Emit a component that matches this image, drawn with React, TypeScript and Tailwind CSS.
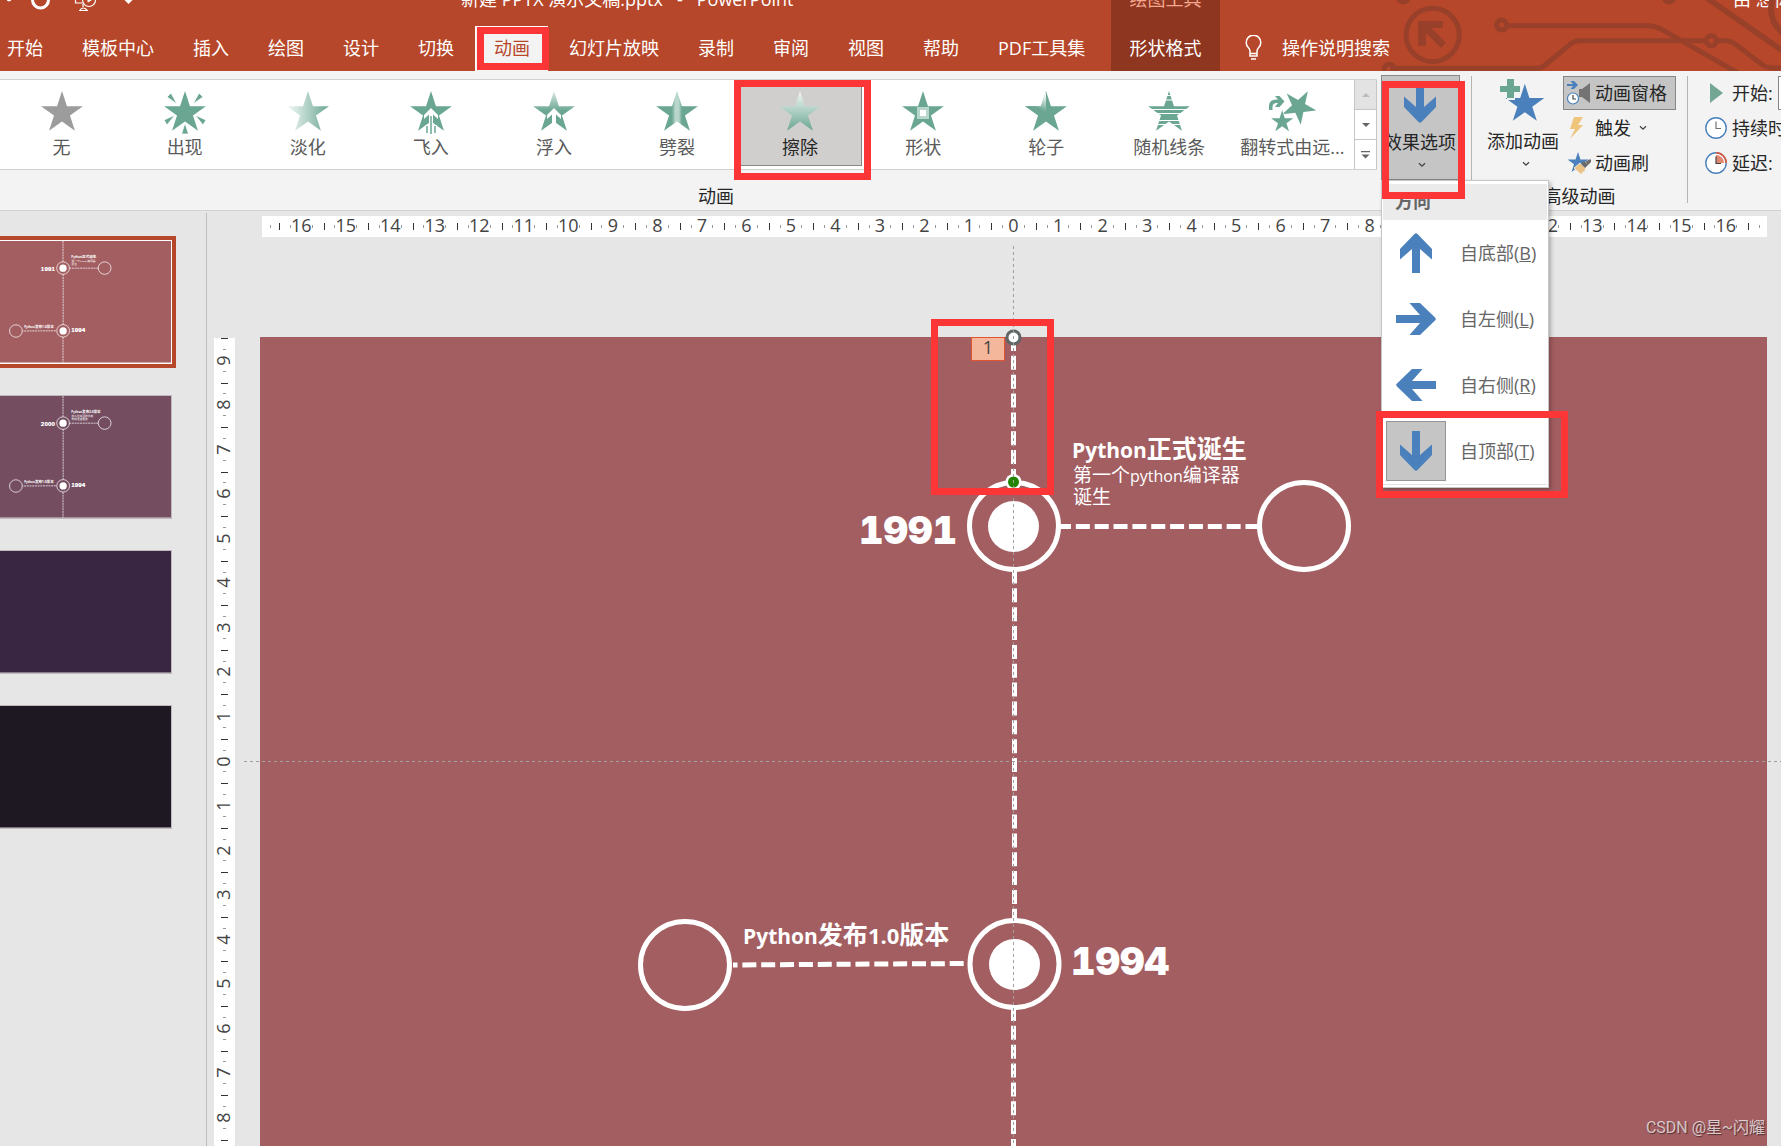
import React from "react";

const STAR =
  "M24 2 28.94 17.2 44.92 17.2 31.99 26.6 36.93 41.8 24 32.4 11.07 41.8 16.01 26.6 3.08 17.2 19.06 17.2Z";
const GREEN = "#6aa692";
const BLUE = "#4a80bb";

/* ---------- shared pieces ---------- */

function Highlight({ className }: { className: string }) {
  return (
    <div
      aria-hidden="true"
      className={`pointer-events-none absolute z-30 border-[7px] border-[#fc3636] ${className}`}
    />
  );
}

function Chevron() {
  return (
    <svg width="8" height="6" viewBox="0 0 8 6" fill="none" aria-hidden="true">
      <path d="M1 1.2 4 4.2 7 1.2" stroke="#444" strokeWidth="1.3" />
    </svg>
  );
}

function BlueArrow({ turn }: { turn: number }) {
  return (
    <svg width="40" height="40" viewBox="0 0 40 40" aria-hidden="true">
      <path
        d="M16 0H24V24L36 13.5V24L21.5 39Q20 40.6 18.5 39L4 24V13.5L16 24Z"
        fill={BLUE}
        transform={`rotate(${turn} 20 20)`}
      />
    </svg>
  );
}

/* ---------- title bar and tabs ---------- */

const TABS = [
  "开始", "模板中心", "插入", "绘图", "设计", "切换", "动画",
  "幻灯片放映", "录制", "审阅", "视图", "帮助", "PDF工具集",
];

function Circuit() {
  return (
    <svg
      className="pointer-events-none absolute right-0 top-0 h-[71px] w-[441px]"
      viewBox="0 0 1323 213"
      fill="none"
      stroke="#984029"
      strokeWidth="15"
      aria-hidden="true"
    >
      <circle cx="278" cy="105" r="80" />
      <path
        d="M234 63H309V84H274L318 128 303 144 258 99V138H234Z"
        fill="#984029"
        stroke="none"
      />
      <circle cx="485" cy="75" r="15" />
      <path d="M500 77H925Q945 77 965 88L1210 228" />
      <circle cx="148" cy="208" r="15" />
      <path d="M150 205H590Q604 205 612 198L690 133Q702 122 718 122H1098" />
      <circle cx="1114" cy="122" r="15" />
      <path d="M1130 122H1155Q1172 122 1186 133L1268 195Q1282 204 1300 204H1323" />
      <path d="M1095 -10 1330 154" strokeWidth="17" />
      <circle cx="190" cy="-9" r="15" />
      <circle cx="987" cy="-9" r="15" />
      <circle cx="1385" cy="26" r="92" strokeWidth="18" />
    </svg>
  );
}

function Header() {
  return (
    <header className="relative flex h-[71px] shrink-0 overflow-hidden whitespace-nowrap bg-[#b7472a] text-lg text-white">
      <Circuit />
      <div className="flex w-[1111px] shrink-0 flex-col">
        <div className="flex h-[26px] items-start overflow-hidden">
          <svg className="w-[461px] shrink-0" height="12" viewBox="0 0 461 12" fill="none" stroke="#fff" aria-hidden="true">
            <path d="M7 0h4l-2 1z" fill="#fff" />
            <circle cx="40.500" cy="0" r="8" strokeWidth="3" />
            <path d="M75.500 -2v5h7M83 4v3M79 10.500h9M80 10q3-4 7 0" strokeWidth="1.200" />
            <circle cx="89" cy="0" r="6.500" strokeWidth="1.200" />
            <path d="M88 -3v5l4-2.500z" fill="#fff" />
            <path d="M124.500 0h8l-4 4z" fill="#fff" stroke="none" />
          </svg>
          <span className="-mt-[15px] leading-7">新建 PPTX 演示文稿.pptx&nbsp;&nbsp; -&nbsp;&nbsp; PowerPoint</span>
        </div>
        <nav className="flex h-[45px] items-stretch gap-[39px] pl-[7px]">
          {TABS.map((tab) =>
            tab === "动画" ? (
              <button
                key={tab}
                type="button"
                aria-current="page"
                className="relative -mx-[18px] border-l border-t border-white bg-[#f3f3f3] px-[18px] pb-[3px] text-[#b7472a]"
              >
                {tab}
                <Highlight className="-right-px bottom-px left-px top-0" />
              </button>
            ) : (
              <button key={tab} type="button" className="pb-0.5">
                {tab}
              </button>
            ),
          )}
        </nav>
      </div>
      <div className="flex w-[109px] shrink-0 flex-col items-center bg-[#8f3621]">
        <div className="h-[26px] overflow-hidden text-[#f4a78f]">
          <div className="-mt-[13px] leading-6">绘图工具</div>
        </div>
        <button type="button" className="h-[45px] pb-0.5">形状格式</button>
      </div>
      <div className="flex min-w-0 flex-1 flex-col">
        <div className="flex h-[26px] justify-end overflow-hidden">
          <span className="-mt-[15px] w-[48px] leading-7">由 想你</span>
        </div>
        <button type="button" className="flex h-[45px] items-center gap-5 pb-0.5 pl-[25px]">
          <svg width="17" height="25" viewBox="0 0 17 25" fill="none" stroke="#fff" strokeWidth="1.500" aria-hidden="true">
            <path d="M5 18.500V16Q5 14.500 3.500 12.800A7.300 7.300 0 1 1 13.500 12.800Q12 14.500 12 16V18.500ZM5 18.500V21H12V18.500M6 24H11" />
          </svg>
          操作说明搜索
        </button>
      </div>
    </header>
  );
}

/* ---------- animation gallery ---------- */

function Defs() {
  return (
    <svg width="0" height="0" className="absolute" aria-hidden="true">
      <defs>
        <linearGradient id="g-fade" x1="0" x2="1" y1="0" y2="0">
          <stop offset="0.05" stopColor="#edf5f2" />
          <stop offset="1" stopColor={GREEN} />
        </linearGradient>
        <linearGradient id="g-float" x1="0" x2="0" y1="0" y2="1">
          <stop offset="0" stopColor="#dbeae5" />
          <stop offset="0.5" stopColor={GREEN} />
        </linearGradient>
        <linearGradient id="g-wipe" x1="0" x2="0" y1="0" y2="1">
          <stop offset="0" stopColor="#f2f8f6" />
          <stop offset="1" stopColor={GREEN} />
        </linearGradient>
        <linearGradient id="g-split" x1="0" x2="1" y1="0" y2="0">
          <stop offset="0.38" stopColor={GREEN} />
          <stop offset="0.46" stopColor="#b9d6cc" />
          <stop offset="0.54" stopColor="#b9d6cc" />
          <stop offset="0.62" stopColor={GREEN} />
        </linearGradient>
        <linearGradient id="g-wheel" x1="0.2" x2="0.45" y1="0.6" y2="0">
          <stop offset="0" stopColor={GREEN} />
          <stop offset="1" stopColor="#f2f8f6" />
        </linearGradient>
      </defs>
    </svg>
  );
}

const UP_ARROW = "M24 19 31 26V30L26 25.500V38H22V25.500L17 30V26Z";

const EFFECTS: { label: string; art: React.ReactNode }[] = [
  { label: "无", art: <path d={STAR} fill="#9c9c9c" /> },
  {
    label: "出现",
    art: (
      <g fill={GREEN}>
        <path d={STAR} />
        <g stroke="#fff" strokeWidth="0.800">
          <path d="M6 8 10 4 16 15ZM42 8 38 4 32 15Z" />
          <path d="M3 31 6 36 14 26ZM45 31 42 36 34 26ZM24 34 27.500 45H20.500Z" />
        </g>
      </g>
    ),
  },
  { label: "淡化", art: <path d={STAR} fill="url(#g-fade)" /> },
  {
    label: "飞入",
    art: (
      <>
        <path d={STAR} fill={GREEN} />
        <path d={UP_ARROW} fill="#fff" />
        <path d="M24 33V45M20 36V44M28 36V44" stroke="#fff" strokeWidth="3.600" />
        <path d="M24 27V45M20 37V44M28 37V44" stroke={GREEN} strokeWidth="1.500" />
      </>
    ),
  },
  {
    label: "浮入",
    art: (
      <>
        <path d={STAR} fill="url(#g-float)" />
        <path d={UP_ARROW} fill="#fff" />
      </>
    ),
  },
  { label: "劈裂", art: <path d={STAR} fill="url(#g-split)" /> },
  { label: "擦除", art: <path d={STAR} fill="url(#g-wipe)" /> },
  {
    label: "形状",
    art: (
      <>
        <path d={STAR} fill={GREEN} />
        <path d="M18 18H30V30H18Z" fill="#b9d6cc" />
        <path d="M21 21H27V27H21Z" fill="#fff" />
      </>
    ),
  },
  {
    label: "轮子",
    art: (
      <>
        <path d={STAR} fill={GREEN} />
        <path d="M24 2V24L16.500 24.800 3.080 17.200H19.060Z" fill="url(#g-wheel)" />
      </>
    ),
  },
  {
    label: "随机线条",
    art: (
      <>
        <path d={STAR} fill={GREEN} />
        <path d="M0 6.500H48M0 11H48M0 20.500H48M0 24.500H48M0 31.500H48M0 35.500H48" stroke="#fff" strokeWidth="1.200" />
      </>
    ),
  },
  {
    label: "翻转式由远...",
    art: (
      <g fill={GREEN}>
        <path d={STAR} transform="translate(30.800 17.800) rotate(30) scale(0.820) translate(-24 -24)" />
        <path
          d={STAR}
          transform="translate(14.200 32.800) scale(0.530) translate(-24 -24)"
          stroke="#fff"
          strokeWidth="2"
          paintOrder="stroke"
        />
        <path d="M1 21V17Q1 10 10 10.500L7 7H11.500L16.500 12.500 11.500 18H7L10 14Q4.500 13.500 4.500 18V21Z" />
      </g>
    ),
  },
];

function Gallery() {
  return (
    <div className="mt-2 flex h-[91px] min-w-0 flex-1 border-y border-[#d1d1d1] bg-white">
      <div className="grid min-w-0 flex-1 grid-cols-11">
        {EFFECTS.map((e) => {
          const on = e.label === "擦除";
          return (
            <button
              key={e.label}
              type="button"
              aria-pressed={on}
              className={
                on
                  ? "relative mt-[3px] flex h-[83px] flex-col items-center border border-[#868a80] bg-[#d1cfcd] pt-[5px] text-[#262626]"
                  : "mt-[3px] flex h-[83px] flex-col items-center border border-transparent pt-[5px] text-[#5a5a5a]"
              }
            >
              <svg width="48" height="48" viewBox="0 0 48 48" aria-hidden="true">
                {e.art}
              </svg>
              <span className="whitespace-nowrap text-lg leading-5">{e.label}</span>
              {on && <Highlight className="-bottom-[15px] -left-1.5 -right-2.5 -top-1" />}
            </button>
          );
        })}
      </div>
      <div className="flex w-[23px] flex-col border-x border-[#c6c6c6]">
        <button type="button" aria-label="上一行" className="flex flex-1 items-center justify-center bg-[#e3e3e3]">
          <svg width="8" height="4" viewBox="0 0 8 4" aria-hidden="true"><path d="M0 4 4 0 8 4Z" fill="#bcbcbc" /></svg>
        </button>
        <button type="button" aria-label="下一行" className="flex flex-1 items-center justify-center border-t border-[#c6c6c6]">
          <svg width="8" height="4" viewBox="0 0 8 4" aria-hidden="true"><path d="M0 0 4 4 8 0Z" fill="#666" /></svg>
        </button>
        <button type="button" aria-label="其他" className="flex flex-1 items-center justify-center border-t border-[#c6c6c6]">
          <svg width="9" height="8" viewBox="0 0 9 8" aria-hidden="true"><path d="M0 0H9V1.200H0ZM0.500 3.500 4.500 7.500 8.500 3.500Z" fill="#666" /></svg>
        </button>
      </div>
    </div>
  );
}

/* ---------- effect options ---------- */

const DIRECTIONS = [
  { label: "自底部", key: "B", turn: 180 },
  { label: "自左侧", key: "L", turn: 270 },
  { label: "自右侧", key: "R", turn: 90 },
  { label: "自顶部", key: "T", turn: 0 },
];

function DirectionMenu() {
  return (
    <div className="absolute left-0 top-[105px] z-20 w-[168px] border border-[#c6c6c6] bg-white px-px pt-[3px] text-lg shadow-[2px_2px_4px_rgba(0,0,0,0.25)]">
      <div className="flex h-9 items-center bg-[#ebebeb] pb-0.5 pl-3 font-bold text-[#666]">方向</div>
      <ul>
        {DIRECTIONS.map((d) => (
          <li key={d.key}>
            <button type="button" className="flex h-[66px] w-full items-center pl-[3px] text-[#666]">
              <span
                className={
                  d.key === "T"
                    ? "flex size-[60px] items-center justify-center border border-[#969696] bg-[#c5c5c5]"
                    : "flex size-[60px] items-center justify-center"
                }
              >
                <BlueArrow turn={d.turn} />
              </span>
              <span className="ml-3.5">
                {d.label}(<u>{d.key}</u>)
              </span>
            </button>
          </li>
        ))}
      </ul>
      <div className="h-[3px] border-t border-[#e1e1e1]" />
      <Highlight className="-left-1.5 -right-5 -bottom-[11px] h-[87px]" />
    </div>
  );
}

function EffectOptions() {
  return (
    <div className="relative ml-1 mr-[11px] mt-1">
      <button
        type="button"
        aria-expanded="true"
        className="flex h-[105px] w-[79px] flex-col items-center border border-[#868686] bg-[#c5c5c5] pr-px pt-[7px] text-[#262626]"
      >
        <BlueArrow turn={0} />
        <span className="mt-[7px] whitespace-nowrap text-lg leading-6">效果选项</span>
        <span className="mt-2 pl-1"><Chevron /></span>
      </button>
      <DirectionMenu />
      <Highlight className="left-px top-1.5 h-[118px] w-[83px]" />
    </div>
  );
}

/* ---------- ribbon ---------- */

function Separator() {
  return <div className="mt-[5px] h-[127px] w-px shrink-0 bg-[#b4b4b4]" />;
}

function PaneIcon() {
  return (
    <svg width="24" height="26" viewBox="0 0 24 26" aria-hidden="true">
      <path d="M0 4H6L3.500 1H7L11 5 7 9H3.500L6 6H0Z" fill={BLUE} />
      <path d="M23 3V23L15 17H12V9H15Z" fill="#737373" />
      <circle cx="6" cy="18.500" r="5.500" fill="#fff" stroke={BLUE} strokeWidth="1.200" />
      <path d="M6 15V19H9" fill="none" stroke="#444" strokeWidth="1.200" />
    </svg>
  );
}

function ClockIcon({ delay }: { delay?: boolean }) {
  return (
    <svg width="22" height="22" viewBox="0 0 22 22" fill="none" aria-hidden="true">
      <circle cx="11" cy="11" r="10.200" fill="#fff" stroke={BLUE} strokeWidth="1.400" />
      {delay && <path d="M11 0.800A10.200 10.200 0 0 1 21.200 11" stroke="#d8593c" strokeWidth="1.600" />}
      {delay && <path d="M11 3A8 8 0 0 1 19 11H11Z" fill="#e08872" />}
      <path d="M11 4.500V11.500H16" stroke={delay ? "#444" : "#737373"} strokeWidth="1.200" />
    </svg>
  );
}

function Ribbon() {
  return (
    <section className="relative z-10 flex h-[140px] shrink-0 border-b border-[#d1d1d1] bg-[#f3f3f3] text-lg text-[#262626]">
      <Defs />
      <div className="flex min-w-0 flex-1 flex-col">
        <div className="flex h-[110px] items-start">
          <Gallery />
          <EffectOptions />
        </div>
        <div className="pr-[39px] text-center leading-8">动画</div>
      </div>
      <Separator />
      <div className="flex w-[215px] shrink-0 flex-col whitespace-nowrap">
        <div className="flex h-[110px] items-start">
          <button type="button" className="ml-3 flex w-[78px] flex-col items-center pt-[7px]">
            <svg width="48" height="46" viewBox="0 0 48 46" aria-hidden="true">
              <path d={STAR} fill={BLUE} transform="translate(3.500 4) scale(0.930)" />
              <path d="M8 0H16V8H22V17H16V22H8V15H1V8H8Z" fill="#f3f3f3" />
              <path d="M8 1H15V8H21V14H15V20H8V14H1V8H8Z" fill={GREEN} />
            </svg>
            <span className="mt-[5px] leading-6">添加动画</span>
            <span className="mt-2 pl-1.5"><Chevron /></span>
          </button>
          <div className="ml-px pt-[5px]">
            <button type="button" aria-pressed="true" className="flex h-[34px] w-[113px] items-center gap-1 border border-[#868686] bg-[#c5c5c5] pl-[3px]">
              <PaneIcon />
              动画窗格
            </button>
            <button type="button" className="flex h-[35px] items-center gap-1 pl-1">
              <svg width="24" height="22" viewBox="0 0 24 22" aria-hidden="true">
                <path d="M7 0H16L11 8H16L3 22 8 12H3Z" fill="#efc57c" />
              </svg>
              触发
              <span className="ml-1"><Chevron /></span>
            </button>
            <button type="button" className="flex h-[35px] items-center gap-1 pl-1">
              <svg width="24" height="24" viewBox="0 0 24 24" aria-hidden="true">
                <path d={STAR} fill={BLUE} transform="translate(-1 0) scale(0.500)" />
                <path d="M7 17 13 12 19 18 14 23.500Z" fill="#eac284" stroke="#f3f3f3" strokeWidth="0.800" />
                <path d="M14 13 17 10 21 14 18 17ZM18.500 11 22 8.500H24V11L21 14Z" fill="#6a6a6a" />
              </svg>
              动画刷
            </button>
          </div>
        </div>
        <div className="text-center leading-8">高级动画</div>
      </div>
      <Separator />
      <div className="w-[93px] shrink-0 overflow-hidden whitespace-nowrap pl-[17px] pt-[4px]">
        <div className="flex h-[35px] items-center gap-[5px]">
          <svg width="22" height="20" viewBox="0 0 22 20" className="shrink-0" aria-hidden="true">
            <path d="M5 0V20L18 10Z" fill="#74a694" />
          </svg>
          <label htmlFor="start">开始:</label>
          <select id="start" className="h-[34px] w-24 shrink-0 border border-[#868686] bg-white">
            <option>单击时</option>
          </select>
        </div>
        <div className="flex h-[35px] items-center gap-[5px]">
          <span className="shrink-0"><ClockIcon /></span>
          <span>持续时间:</span>
        </div>
        <div className="flex h-[35px] items-center gap-[5px]">
          <span className="shrink-0"><ClockIcon delay /></span>
          <span>延迟:</span>
        </div>
      </div>
    </section>
  );
}

/* ---------- slide drawing ---------- */

type SlideData = {
  color: string;
  top?: { year: string; latin: string; rest: string; sub: React.ReactNode };
};

const SERIES = "'Open Sans','Noto Sans CJK SC',sans-serif";

const SLIDES: SlideData[] = [
  {
    color: "#a35e62",
    top: {
      year: "1991",
      latin: "",
      rest: "正式诞生",
      sub: (
        <>
          <text x="813" y="145" fontSize="19">第一个<tspan fontSize="16">python</tspan>编译器</text>
          <text x="813" y="167" fontSize="19">诞生</text>
        </>
      ),
    },
  },
  {
    color: "#744d61",
    top: {
      year: "2000",
      latin: "2.0",
      rest: "版本",
      sub: (
        <>
          <text x="813" y="145" fontSize="19">加入垃圾回收机制</text>
          <text x="813" y="167" fontSize="19">构成语言框架</text>
        </>
      ),
    },
  },
  { color: "#382642" },
  { color: "#1e1823" },
];

function SlideArt({ data, editing }: { data: SlideData; editing?: boolean }) {
  const { color, top } = data;
  return (
    <svg
      viewBox="0 0 1507 848"
      className="block h-auto w-full overflow-visible"
      fontFamily={SERIES}
      fill="#fff"
      role="img"
      aria-label="幻灯片"
    >
      <rect width="1507" height="848" fill={color} />
      {top && (
        <>
          <g stroke="#fff" strokeWidth="5" fill="none" strokeDasharray="14 4.850">
            <path d="M753.500 0V144" />
            <path d="M754.500 232.500V582" />
            <path d="M753.500 670V848" />
            <path d="M797 189.500H998" />
            <path d="M473 628 705 626.500" strokeDashoffset="9.500" />
          </g>
          <g stroke="#fff" strokeWidth="5" fill="none">
            <ellipse cx="754" cy="189" rx="44.500" ry="43.500" />
            <ellipse cx="1044" cy="189" rx="44.500" ry="43.500" />
            <ellipse cx="425" cy="628" rx="44.500" ry="43.500" />
            <ellipse cx="754.500" cy="627" rx="44.500" ry="43.500" />
          </g>
          <circle cx="753.500" cy="189.500" r="25.500" />
          <circle cx="754.500" cy="627.500" r="25.500" />
          <g fontFamily="Inter, sans-serif" fontWeight="900" fontSize="38" style={{ fontVariantNumeric: "tabular-nums" }}>
            <text x="697" y="207" textAnchor="end">{top.year}</text>
            <text x="811" y="638">1994</text>
          </g>
          <g fontWeight="700" fontSize="25">
            <text x="812" y="121">
              <tspan fontSize="21">Python</tspan>
              {top.latin ? <>发布<tspan fontSize="21">{top.latin}</tspan></> : null}
              {top.rest}
            </text>
            <text x="483" y="607">
              <tspan fontSize="21">Python</tspan>发布<tspan fontSize="22">1.0</tspan>版本
            </text>
          </g>
          {top.sub}
        </>
      )}
      {editing && (
        <>
          <circle cx="753.500" cy="0.500" r="6.500" stroke="#606666" strokeWidth="3" />
          <circle cx="753.500" cy="145" r="8" />
          <circle cx="753.500" cy="145" r="5.500" fill="#228400" />
          <g stroke="#a0a0a0" strokeWidth="1" strokeDasharray="3 3" fill="none">
            <path d="M753.500 -91V848" />
            <path d="M-16 424.500H1521" />
          </g>
          <rect x="711.500" y="0.500" width="33" height="23" fill="#f5b79b" stroke="#e0552f" />
          <text x="728" y="17" fontSize="18" textAnchor="middle" fill="#444">1</text>
          <rect x="674.500" y="-14.500" width="116" height="169" fill="none" stroke="#fc3636" strokeWidth="7" />
        </>
      )}
    </svg>
  );
}

/* ---------- workspace ---------- */

function Thumbnails() {
  return (
    <aside className="mt-0.5 w-[207px] shrink-0 overflow-hidden border-r border-[#bdbdbd] pt-[23px]">
      <ol>
        {SLIDES.map((s, i) => (
          <li key={s.color} className="h-[155px]">
            {i === 0 ? (
              <button type="button" aria-current="true" className="-ml-[50px] block w-[226px] border-4 border-[#b7472a] bg-white p-px">
                <SlideArt data={s} />
              </button>
            ) : (
              <button type="button" className="-ml-[46px] block w-[218px] pt-1">
                <span className="block border border-[#c0b8ba]">
                  <SlideArt data={s} />
                </span>
              </button>
            )}
          </li>
        ))}
      </ol>
    </aside>
  );
}

const range = (n: number) => Array.from({ length: 2 * n + 1 }, (_, i) => Math.abs(i - n));

function HorizontalRuler() {
  return (
    <div className="ml-[55px] mr-[14px] mt-[5px] flex h-[21px] shrink-0 items-center bg-white text-lg leading-none text-[#444]">
      <div className="flex w-[17px] justify-center"><i className="h-[3px] w-px bg-[#999]" /></div>
      {range(16).map((n, i) => (
        <div key={i} className="flex h-[18px] flex-1 items-center justify-between">
          <i className="h-[7px] w-px bg-[#333]" />
          <i className="h-[3px] w-px bg-[#999]" />
          <span className="flex w-px justify-center pb-1">{n}</span>
          <i className="h-[3px] w-px bg-[#999]" />
          <i className="w-px" />
        </div>
      ))}
      <div className="flex w-[19px] items-center gap-2.5">
        <i className="h-[7px] w-px bg-[#333]" />
        <i className="h-[3px] w-px bg-[#999]" />
      </div>
    </div>
  );
}

function VerticalRuler() {
  return (
    <div className="ml-[7px] mt-px flex h-[846px] w-[21px] shrink-0 flex-col bg-white text-lg leading-none text-[#444]">
      {range(9).map((n, i) => (
        <div key={i} className="flex min-h-0 flex-1 flex-col items-center justify-between">
          <i className="h-px w-[7px] bg-[#333]" />
          <i className="h-px w-[3px] bg-[#999]" />
          <span className="flex h-px items-center"><span className="-rotate-90 pb-[3px]">{n}</span></span>
          <i className="h-px w-[3px] bg-[#999]" />
          <i className="h-px" />
        </div>
      ))}
    </div>
  );
}

export default function App() {
  return (
    <div className="relative flex h-screen flex-col overflow-hidden bg-[#e6e6e6] font-['Open_Sans','Noto_Sans_CJK_SC',sans-serif]">
      <Header />
      <Ribbon />
      <div className="flex min-h-0 flex-1">
        <Thumbnails />
        <main className="flex min-w-0 flex-1 flex-col">
          <HorizontalRuler />
          <div className="mt-[100px] flex min-h-0 flex-1 items-start">
            <VerticalRuler />
            <div className="ml-[25px] mr-[14px] min-w-0 flex-1">
              <SlideArt data={SLIDES[0]} editing />
            </div>
          </div>
        </main>
      </div>
      <p className="absolute bottom-1.5 right-4 font-['Roboto','Noto_Sans_CJK_SC',sans-serif] text-base text-white/70 [text-shadow:1px_1px_1px_rgba(0,0,0,0.5)]">
        CSDN @星~闪耀
      </p>
    </div>
  );
}
